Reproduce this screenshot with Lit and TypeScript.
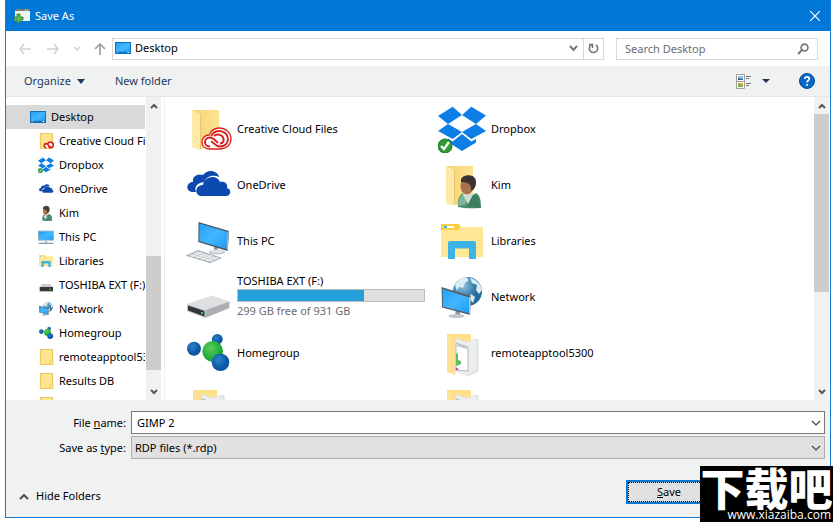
import { LitElement, html, svg, css } from "lit";
import { customElement, property } from "lit/decorators.js";

const folderBack = svg`
  <path d="M8 5H35V40L16 44Z" fill="url(#fold)"/>
  <path d="M8 5L16 9V45L8 42Z" fill="#ffe9a6"/>
  <path d="M16 9L17 10V42L16 45Z" fill="#e8c868"/>`;

const docFolder = svg`
  <path d="M9 5H33V20L17 44Z" fill="#ffdf88"/>
  <path d="M18 9L27 13L39 10V42L30 47L18 42Z" fill="#eceeee" stroke="#dcdedf" stroke-width=".8"/>
  <path d="M18 14L30 18V42L18 41Z" fill="#fff" stroke="#b5bbc0" stroke-width="1"/>
  <path d="M19 16L29 19" stroke="#b9c7d6" stroke-width="2"/>
  <path d="M31 46L40 42L40 10" fill="none" stroke="#d5d8d9"/>
  <path d="M18 24L20 25V31L23 32V35L18 37Z" fill="#5bbf62"/>
  <circle cx="19" cy="40" r="1.3" fill="#d050c8"/>
  <path d="M9 5L17 10V46L9 43Z" fill="#ffe094"/>`;

const person = svg`
  <path d="M20 46C19 37 22 34 25 32L31 36L38 32C42 34 43 39 43 47C35 47 28 48 20 46Z" fill="#4c8d6b"/>
  <path d="M20 45C20 38 22 35 25 33L31 36L27 44Z" fill="#7eb495"/><path d="M25 34L30 43L35 34L32 31L26 31Z" fill="#d3ded8"/><path d="M35 34L29 46L43 47L40 36Z" fill="#3f7c5d"/>
  <ellipse cx="29" cy="25" rx="6.500" ry="8.500" fill="#a8714e"/>
  <path d="M23 18C25 13 38 12 38 21C38 26 36 29 33 30C34 25 32 21 23 21Z" fill="#3d3330"/>`;

const icons: Record<string, unknown> = {
  creative: svg`${folderBack}
    <path d="M26 44C21 44 18 41 18 37C18 33 21 30 25 30C27 26 30 23 35 23C42 23 47 28 47 34C47 40 42 44 36 44Z" fill="#fff" stroke="#d8201c" stroke-width="1.3"/>
    <path d="M26 41.500C23 41.500 21 39.500 21 37C21 34.500 23 32.500 26 32.500C29 32.500 31 35 34 38M27 31C29 28 31 26 35 26C40 26 44 29.500 44 34C44 38 41 41.500 36 41.500C31 41.500 30 37 27 36.500M30 31C32 29.500 35 29 38 31C41 34 40 38 36 38.500" fill="none" stroke="#d8201c" stroke-width="1.900"/>`,
  dropbox: svg`
    <path d="M0 11L14.700 1.700L24 10L10 19ZM33.300 1.700L48 10.500L38 19L24 10ZM10 19L0 26L14.700 34L24 27ZM38 19L48 26L33.300 34L24 27ZM24 29L14.700 36.500L10 33.500V37L24 46L38 37.500V34L33.300 36.500Z" fill="#0c7ee6"/>
    <circle cx="7" cy="41" r="7" fill="#2f9b32" stroke="#197320"/><path d="M3 41L6 44L11 37" fill="none" stroke="#fff" stroke-width="2.200"/>`,
  onedrive: svg`
    <path d="M9 31C1 31 2 21 9 21C8 15 14 12 19 14C24 7 34 10 35 16C28 13 22 16 20 21C13 22 10 26 12 31Z" fill="#0c4ab0"/>
    <path d="M17 35C10 34 11 24 19 24C20 15 33 13 36 21C41 20 44 23 43 27C48 28 47 35 42 35Z" fill="#0c4ab0"/>`,
  kimfolder: svg`${folderBack}${person}`,
  pc: svg`
    <path d="M30 28L34 29V35H30Z" fill="#8a949a"/><ellipse cx="33" cy="35" rx="8" ry="2.600" fill="#b2bbc0"/><ellipse cx="33" cy="34.300" rx="7" ry="1.900" fill="#dfe4e6"/>
    <path d="M14.500 5L45 14L43.700 34L14.300 25Z" fill="#455663"/><path d="M15.500 6.500L43.500 15L42.500 32L15.300 24Z" fill="url(#scr)"/><path d="M43.500 15L45 14L43.700 34L42.500 32Z" fill="#a9b3b9"/>
    <path d="M2.700 38.500L14 33.500L37 41L26 45.700Z" fill="#c3c9cd" stroke="#8f989e" stroke-width=".7"/>
    <path d="M6 37.500L29 44.500M9 36L32 43M12 35L35 42M7 40L18 35M12 41L23 37M17 43L28 38.500M22 44L33 40" stroke="#f4f6f7" stroke-width=".8"/>`,
  libraries: svg`
    <path d="M3 7H21L24 12L22 14H3Z" fill="#fbcf3f"/><rect x="6" y="9" width="10" height="2" fill="#fff"/><rect x="6" y="9" width="3" height="2" fill="#3db0e8"/>
    <path d="M3 13H20L23 10H44Q45 10 45 11V39Q45 40 44 40H4Q3 40 3 39Z" fill="#ffe795"/>
    <path d="M10 42V26Q10 24 12 24H36Q38 24 38 26V42H31V31.500H17V42Z" fill="#3bb3e6"/>`,
  drive: svg`
    <path d="M28 22.500L45.500 28.500L21.500 37L3 31Z" fill="#dedfe1"/><path d="M21.500 37L45.500 28.500V35L21 45Z" fill="#adafb2"/>
    <path d="M3 31L21.500 37L21 45L3 38Z" fill="#c4c6c8"/><path d="M4 32.500L20.500 38V43.500L4 37.500Z" fill="#33373a"/><rect x="17" y="39" width="2" height="2" fill="#32d44a"/>`,
  network: svg`
    <circle cx="29.500" cy="18.500" r="14.500" fill="url(#globe)"/>
    <path d="M17 12C20 6 25 4 28 4L31 7L27 10L25 15L21 14L19 18ZM32 5C38 6 43 11 44 17L41 21L38 17L39 12L34 10ZM33 21L37 24L35 30L31 25Z" fill="#d9ebf3"/>
    <path d="M18 37L22 38V42H17Z" fill="#8a949a"/><ellipse cx="18.500" cy="43" rx="8" ry="2" fill="#bfc7cb"/>
    <path d="M3.500 14L33 23L32 42L4 34.500Z" fill="#55636e"/><path d="M4.500 16L31 24.500V40L5 33.500Z" fill="url(#scr)"/><path d="M31 24.500L33 23L32 42L31 40Z" fill="#b6bfc5"/>`,
  homegroup: svg`
    <circle cx="33.300" cy="10.300" r="5.400" fill="url(#bb)"/><circle cx="10" cy="19.700" r="7" fill="url(#bb)"/>
    <circle cx="28.700" cy="22.300" r="10.400" fill="url(#gb)"/><circle cx="36.500" cy="33.300" r="8.800" fill="url(#bb)"/>`,
  docs: docFolder,
  desktop: svg`<path d="M0 6H48V42H0Z" fill="#0b73c2"/><path d="M3 9H45V39H3Z" fill="url(#scr)"/><path d="M3 37H45" stroke="#0b62aa" stroke-width="3"/><path d="M5 37.500H8M37 37.500H43" stroke="#fff" stroke-width="2.500"/>`,
  folder: svg`<path d="M7 1H44V47H7Z" fill="#ffe48f" stroke="#ecc44b" stroke-width="3"/><path d="M37 33H44V47H37Z" fill="#ffefb4" stroke="#ecc44b" stroke-width="2.500"/>`,
  ccsmall: svg`<path d="M7 1H43V47H7Z" fill="#ffe48f" stroke="#ecc44b" stroke-width="3"/><path d="M22 45C12 42 18 29 27 31C34 20 50 28 47 38C46 44 42 46 36 46Z" fill="#fff"/><path d="M25 44C16 44 17 32 25 32C31 32 32 42 38 42M29 32C34 23 47 28 46 37C45 44 35 46 31 41" fill="none" stroke="#d8201c" stroke-width="5"/>`,
  person: svg`<path d="M13 46C11 33 16 30 21 28L27 31L34 27C41 29 43 36 42 47C31 49 21 49 13 46Z" fill="#4c8d6b"/><path d="M17 36L22 28L27 32L24 43Z" fill="#d9e2dc"/><ellipse cx="23" cy="17" rx="8" ry="12" fill="#a8714e"/><path d="M15 9C18 -1 36 0 35 13C35 20 32 24 28 26C29 18 26 13 15 12Z" fill="#4b3e38"/>`,
  pcsmall: svg`<path d="M0 5H48V35H0Z" fill="#8fb4cf"/><path d="M3 8H45V32H3Z" fill="url(#scr)"/><path d="M20 35H28V41H20Z" fill="#b9c4cb"/><path d="M2 43H46" stroke="#8b9aa5" stroke-width="4"/>`,
  drivesmall: svg`<path d="M12 21H36L45 30H6Z" fill="#c9cbcd"/><path d="M5 30H45V43H5Z" fill="#34383b"/><path d="M34 35H39V38H34Z" fill="#32d44a"/>`,
};

@customElement("shell-icon")
class ShellIcon extends LitElement {
  @property() name = "folder";
  @property({ type: Number }) size = 48;
  static styles = css`:host { display: block; flex: none; } svg { display: block; }`;
  render() {
    return html`<svg width=${this.size} height=${this.size} viewBox="0 0 48 48" aria-hidden="true">
      <defs>
        <linearGradient id="fold"><stop offset=".2" stop-color="#f6d67a"/><stop offset="1" stop-color="#ffe391"/></linearGradient>
        <linearGradient id="scr" x2="1" y2="1"><stop offset="0" stop-color="#1ea0f8"/><stop offset=".5" stop-color="#45b6ff"/><stop offset="1" stop-color="#1c9cf4"/></linearGradient>
        <radialGradient id="globe" cx=".35" cy=".3"><stop offset="0" stop-color="#8cc4dd"/><stop offset="1" stop-color="#236c9c"/></radialGradient>
        <radialGradient id="bb" cx=".4" cy=".35"><stop offset="0" stop-color="#2c82c9"/><stop offset="1" stop-color="#0a56a3"/></radialGradient>
        <radialGradient id="gb" cx=".4" cy=".35"><stop offset="0" stop-color="#5bd05c"/><stop offset="1" stop-color="#1faa35"/></radialGradient>
      </defs>${icons[this.name]}</svg>`;
  }
}

@customElement("scroll-bar")
class ScrollBar extends LitElement {
  @property({ type: Number }) before = 0;
  @property({ type: Number }) thumb = 1;
  @property({ type: Number }) after = 0;
  static styles = css`
    :host { display: flex; flex-direction: column; flex: none; width: 15px; background: #f0f1f1; }
    button { all: unset; height: 17px; display: grid; place-items: center; }
    .track { flex: 1; display: flex; flex-direction: column; }
    .thumb { background: #cdcdcd; }
  `;
  render() {
    return html`
      <button aria-label="Scroll up"><svg width="8" height="6" viewBox="0 0 8 6"><path d="M1 5L4 2L7 5" fill="none" stroke="#555" stroke-width="2"/></svg></button>
      <div class="track">
        <div style="flex:${this.before} 0 0px"></div>
        <div class="thumb" style="flex:${this.thumb} 0 0px"></div>
        <div style="flex:${this.after} 0 0px"></div>
      </div>
      <button aria-label="Scroll down"><svg width="8" height="6" viewBox="0 0 8 6"><path d="M1 1L4 4L7 1" fill="none" stroke="#555" stroke-width="2"/></svg></button>`;
  }
}

const tree = [
  ["ccsmall", "Creative Cloud Files"], ["dropbox", "Dropbox"], ["onedrive", "OneDrive"], ["person", "Kim"],
  ["pcsmall", "This PC"], ["libraries", "Libraries"], ["drivesmall", "TOSHIBA EXT (F:)"], ["network", "Network"],
  ["homegroup", "Homegroup"], ["folder", "remoteapptool5300"], ["folder", "Results DB"], ["folder", ""],
];

const files = [
  ["creative", "Creative Cloud Files"], ["dropbox", "Dropbox"],
  ["onedrive", "OneDrive"], ["kimfolder", "Kim"],
  ["pc", "This PC"], ["libraries", "Libraries"],
  ["drive", "TOSHIBA EXT (F:)"], ["network", "Network"],
  ["homegroup", "Homegroup"], ["docs", "remoteapptool5300"],
  ["docs", ""], ["docs", ""],
];

const chevron = html`<svg width="10" height="6" viewBox="0 0 10 6" aria-hidden="true"><path d="M1 1L5 5L9 1" fill="none" stroke="#444" stroke-width="1.200"/></svg>`;

@customElement("app-root")
class AppRoot extends LitElement {
  static styles = css`
    :host { display: block; position: relative; height: 100vh; box-sizing: border-box; padding: 0 4px 4px 5px; overflow: hidden;
      background: #fff; color: #000; font: 11px/16px "Noto Sans", "Open Sans", sans-serif; }
    * { box-sizing: border-box; }
    button { all: unset; box-sizing: border-box; cursor: default; }
    input, select { font: inherit; color: inherit; border-radius: 0; margin: 0; outline: 0; }
    .window { height: 100%; display: flex; flex-direction: column; border: 1px solid #1479d3; border-top: 0; }
    .title { display: flex; align-items: center; flex: none; height: 31px; padding: 0 10px 0 8px; gap: 5px; background: #0078d7; color: #fff; }
    .title h1 { flex: 1; margin: 0; font: inherit; }
    svg { display: block; flex: none; }
    .nav { display: flex; align-items: center; flex: none; height: 35px; padding: 0 12px 0 12px; }
    .arrows { display: flex; align-items: center; gap: 14px; width: 94px; height: 22px; }
    .address { flex: 1; display: flex; align-items: center; height: 22px; border: 1px solid #d9d9d9; padding-left: 2px; gap: 4px; min-width: 0; }
    .place { flex: 1; display: flex; align-items: center; gap: 4px; padding-bottom: 2px; }
    .refresh { width: 20px; height: 20px; margin-left: 1px; border-left: 1px solid #d9d9d9; display: grid; place-items: center; }
    .search { display: flex; align-items: center; width: 202px; height: 22px; margin-left: 12px; border: 1px solid #d9d9d9; padding: 0 8px; }
    .search input { flex: 1; min-width: 0; border: 0; padding: 0; background: none; }
    .search input::placeholder { color: #6d6d6d; opacity: 1; }
    .tools { display: flex; align-items: center; flex: none; height: 31px; padding: 0 15px 0 18px; background: #f0f2f2; border-bottom: 1px solid #e5e7e7; color: #1e395b; }
    .organize { display: flex; align-items: center; gap: 6px; margin-right: 30px; }
    .view { display: flex; align-items: center; gap: 11px; margin: 0 29px 0 auto; }
    .panes { flex: 1; min-height: 0; display: flex; padding-right: 1px; }
    .side { width: 139px; margin-right: 1px; flex: none; overflow: hidden; padding-top: 8px; }
    .node { display: flex; align-items: center; gap: 5px; width: 100%; height: 24px; padding-left: 32px; white-space: nowrap; overflow: hidden; }
    .top { padding-left: 24px; background: #d9d9d9; }
    .rule { width: 4px; flex: none; border-right: 1px solid #edf0f0; }
    .files { flex: 1; overflow: hidden; padding: 4px 0 0 19px; display: grid; grid-template-columns: repeat(2, 254px); grid-auto-rows: 56px; align-content: start; }
    .file { display: flex; align-items: center; gap: 5px; white-space: nowrap; }
    .disk { width: 188px; padding-bottom: 2px; }
    .disk .label, .disk .free { display: block; }
    .disk .free { color: #6d6d6d; padding-top: 1px; }
    .meter { display: block; height: 13px; border: 1px solid #bcbcbc; background: #e0e0e0; }
    .used { display: block; height: 100%; background: #26a0da; }
    .foot { flex: none; background: #f0f2f2; padding: 11px 5px 13px 6px; }
    .field { display: grid; grid-template-columns: 119px 1fr; align-items: center; margin-bottom: 2px; }
    .field label { text-align: right; padding-right: 5px; }
    .combo { display: grid; grid-template-columns: 1fr; align-items: center; }
    .combo > * { grid-area: 1 / 1; }
    .combo svg, .combo button { justify-self: end; margin-right: 4px; pointer-events: none; }
    .combo button svg { margin: 0; }
    .box { width: 100%; height: 23px; border: 1px solid #7a7a7a; background: #fff; padding: 0 5px; }
    .pick { appearance: none; border-color: #adadad; background: #e1e1e1; padding: 0 3px; }
    .actions { display: flex; align-items: flex-end; justify-content: space-between; margin-top: 21px; padding: 0 113px 0 7px; }
    .hide { display: flex; align-items: center; gap: 7px; }
    .save { width: 86px; height: 24px; border: 2px solid #0078d7; background: #e1e1e1; outline: 1px dotted #000; outline-offset: -3px; text-align: center; line-height: 20px; }
    .mark { position: absolute; right: 2px; bottom: 0; width: 133px; height: 56px; background: #000; color: #fff; overflow: hidden; text-align: center; }
    .mark strong { display: block; font: 900 44px/42px "Noto Sans CJK SC", sans-serif; }
    .mark small { display: block; text-align: right; padding-right: 2px; font: 12px/14px "Open Sans", sans-serif; }
  `;

  render() {
    return html`
      <div class="window">
        <header class="title">
          <svg width="16" height="14" viewBox="0 0 16 14"><path d="M1 0H16V12H1Z" fill="#f1f3ef"/><path d="M1 1H16" stroke="#777" stroke-width="2"/><path d="M11 1H12M13 1H14" stroke="#fff"/><path d="M3 5H6V8H9V11H6V14H3V11H0V8H3Z" fill="#58b957" stroke="#267b2c" stroke-width=".8"/></svg>
          <h1>Save As</h1>
          <button aria-label="Close"><svg width="10" height="10" viewBox="0 0 10 10"><path d="M0 0L10 10M10 0L0 10" stroke="#fff" stroke-width="1.200"/></svg></button>
        </header>
        <div class="nav">
          <div class="arrows">
            <button aria-label="Back"><svg width="14" height="12" viewBox="0 0 14 12"><path d="M6 1L2 6L6 11M2 6H13" fill="none" stroke="#d2d2d2" stroke-width="1.600"/></svg></button>
            <button aria-label="Forward"><svg width="14" height="12" viewBox="0 0 14 12"><path d="M8 1L12 6L8 11M12 6H1" fill="none" stroke="#d2d2d2" stroke-width="1.600"/></svg></button>
            <button aria-label="Recent locations"><svg width="6" height="5" viewBox="0 0 6 5"><path d="M0 1L3 4L6 1" fill="none" stroke="#cfcfcf" stroke-width="1.500"/></svg></button>
            <button aria-label="Up"><svg width="12" height="12" viewBox="0 0 12 12"><path d="M1 6L6 1L11 6M6 1V12" fill="none" stroke="#a0a0a0" stroke-width="1.700"/></svg></button>
          </div>
          <div class="address">
            <div class="place"><shell-icon name="desktop" size="16"></shell-icon>Desktop</div>
            <button aria-label="Previous locations"><svg width="9" height="7" viewBox="0 0 9 7"><path d="M1 1L4.500 5L8 1" fill="none" stroke="#777" stroke-width="2"/></svg></button>
            <button class="refresh" aria-label="Refresh"><svg width="11" height="11" viewBox="0 0 11 11"><path d="M8 2A4.200 4.200 0 1 1 3 2M1 1.500H4.500V5" fill="none" stroke="#777" stroke-width="1.600"/></svg></button>
          </div>
          <div class="search">
            <input type="search" aria-label="Search Desktop" placeholder="Search Desktop">
            <svg width="12" height="12" viewBox="0 0 12 12"><circle cx="7.500" cy="4.500" r="3.400" fill="none" stroke="#777" stroke-width="1.700"/><path d="M5 7L1 11" stroke="#777" stroke-width="2"/></svg>
          </div>
        </div>
        <div class="tools">
          <button class="organize">Organize<svg width="8" height="5" viewBox="0 0 8 5"><path d="M0 0H8L4 5Z" fill="#1e395b"/></svg></button>
          <button>New folder</button>
          <button class="view" aria-label="Change your view">
            <svg width="15" height="15" viewBox="0 0 15 15"><path d="M.5.500H8.500V14.500H.5ZM.5 7.500H8.500" fill="#fff" stroke="#a0a0a0"/><path d="M2 2H7V6H2Z" fill="#8ec6ee"/><path d="M2 4L7 5V6H2Z" fill="#37647f"/><path d="M2 9H7V13H2Z" fill="#76b64b"/><path d="M4 9H7V11H4Z" fill="#e9aa35"/><path d="M10 2.500H15M10 4.500H13M10 9.500H15M10 11.500H13" stroke="#777"/></svg>
            <svg width="8" height="4" viewBox="0 0 8 4"><path d="M0 0H8L4 4Z" fill="#1e395b"/></svg>
          </button>
          <button aria-label="Help"><svg width="16" height="16" viewBox="0 0 16 16"><circle cx="8" cy="8" r="7.500" fill="#0868c8" stroke="#064a8e"/><path d="M5.700 6C5.700 3 10.500 3.200 10.300 6C10.200 7.500 8 7.600 8 9.500M8 11V12.800" fill="none" stroke="#fff" stroke-width="1.700"/></svg></button>
        </div>
        <div class="panes">
          <nav class="side" aria-label="Folders">
            <button class="node top"><shell-icon name="desktop" size="16"></shell-icon>Desktop</button>
            ${tree.map(([icon, label]) => html`<button class="node"><shell-icon name=${icon} size="16"></shell-icon>${label}</button>`)}
          </nav>
          <scroll-bar before="142" thumb="114" after="13"></scroll-bar>
          <div class="rule"></div>
          <main class="files">
            ${files.map(([icon, label]) => html`<button class="file"><shell-icon name=${icon}></shell-icon>
              ${icon === "drive"
                ? html`<span class="disk"><span class="label">${label}</span><span class="meter"><span class="used" style="width:${(1 - 299 / 931) * 100}%"></span></span><span class="free">299 GB free of 931 GB</span></span>`
                : html`<span>${label}</span>`}</button>`)}
          </main>
          <scroll-bar before="0" thumb="178" after="91"></scroll-bar>
        </div>
        <footer class="foot">
          <div class="field"><label for="name">File <u>n</u>ame:</label>
            <div class="combo"><input id="name" class="box" value="GIMP 2"><button aria-label="Recent names">${chevron}</button></div></div>
          <div class="field"><label for="type">Save as <u>t</u>ype:</label>
            <div class="combo"><select id="type" class="box pick"><option>RDP files (*.rdp)</option></select>${chevron}</div></div>
          <div class="actions">
            <button class="hide"><svg width="10" height="7" viewBox="0 0 10 7"><path d="M1 6L5 2L9 6" fill="none" stroke="#444" stroke-width="1.800"/></svg>Hide Folders</button>
            <button class="save"><u>S</u>ave</button>
          </div>
        </footer>
      </div>
      <div class="mark"><strong>下载吧</strong><small>www.xiazaiba.com</small></div>
    `;
  }
}
